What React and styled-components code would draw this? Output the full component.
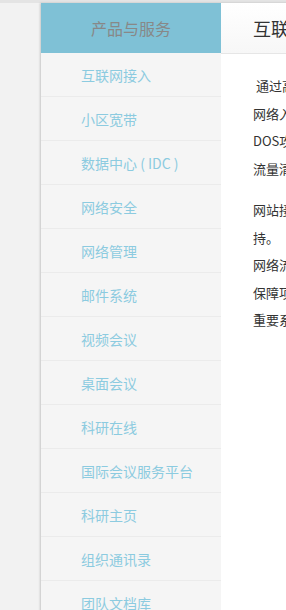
import React from "react";
import styled, { createGlobalStyle } from "styled-components";

const Global = createGlobalStyle`
  html, body {
    margin: 0;
    padding: 0;
    overflow: hidden;
    background: #f2f2f2;
    font-family: "Noto Sans CJK SC", "Noto Sans", sans-serif;
  }
`;

const TopBar = styled.div`
  height: 3px;
  background: #e4e4e4;
`;

const Layout = styled.div`
  display: flex;
  align-items: flex-start;
  margin-left: 41px;
  width: 900px;
  box-shadow: -1px 0 2px rgba(0, 0, 0, 0.18);
`;

const Sidebar = styled.nav`
  width: 180px;
  flex-shrink: 0;
  background: #f5f5f5;
  display: flex;
  flex-direction: column;
`;

const SideHeader = styled.div`
  height: 50px;
  background: #7fc1d6;
  color: #888888;
  font-size: 16px;
  display: flex;
  align-items: center;
  justify-content: center;
`;

const MenuItem = styled.a`
  display: flex;
  align-items: center;
  height: 43px;
  padding-left: 40px;
  border-bottom: 1px solid #ebebeb;
  color: #8ccbe0;
  font-size: 14px;
  text-decoration: none;
`;

const Main = styled.section`
  flex: 1;
  background: #ffffff;
  min-height: 620px;
`;

const MainHeader = styled.div`
  height: 50px;
  display: flex;
  align-items: center;
  padding-left: 32px;
  background: linear-gradient(#ffffff, #f7f7f7);
  border-bottom: 1px solid #e6e6e6;
  color: #333333;
  font-size: 18px;
`;

const Content = styled.div`
  padding: 18px 32px;
  color: #333333;
  font-size: 13px;
  line-height: 27.5px;
`;

const Para = styled.p`
  margin: 0 0 ${(p) => p.$gap || 0}px;
  white-space: pre;
`;

const menu = [
  "互联网接入",
  "小区宽带",
  "数据中心 ( IDC )",
  "网络安全",
  "网络管理",
  "邮件系统",
  "视频会议",
  "桌面会议",
  "科研在线",
  "国际会议服务平台",
  "科研主页",
  "组织通讯录",
  "团队文档库",
];

export default function App() {
  return (
    <>
      <Global />
      <TopBar />
      <Layout>
        <Sidebar>
          <SideHeader>产品与服务</SideHeader>
          {menu.map((m) => (
            <MenuItem key={m} href="#">
              {m}
            </MenuItem>
          ))}
        </Sidebar>
        <Main>
          <MainHeader>互联网接入</MainHeader>
          <Content>
            <Para $gap={14}>
              {" 通过高速光纤链路为用户提供稳定可靠的互联网接入服务，"}
              <br />
              {"网络入口部署专业防火墙与入侵检测系统，可有效抵御"}
              <br />
              {"DOS攻击等各类网络攻击，并对异常流量进行实时监测与"}
              <br />
              {"流量清洗，保障用户业务连续稳定运行。"}
            </Para>
            <Para>
              {"网站接入提供域名解析、虚拟主机与服务器托管等全方位技术支"}
              <br />
              {"持。"}
              <br />
              {"网络流量实时监控与带宽管理，"}
              <br />
              {"保障项目数据传输安全高效，"}
              <br />
              {"重要系统提供7×24小时运维服务。"}
            </Para>
          </Content>
        </Main>
      </Layout>
    </>
  );
}
